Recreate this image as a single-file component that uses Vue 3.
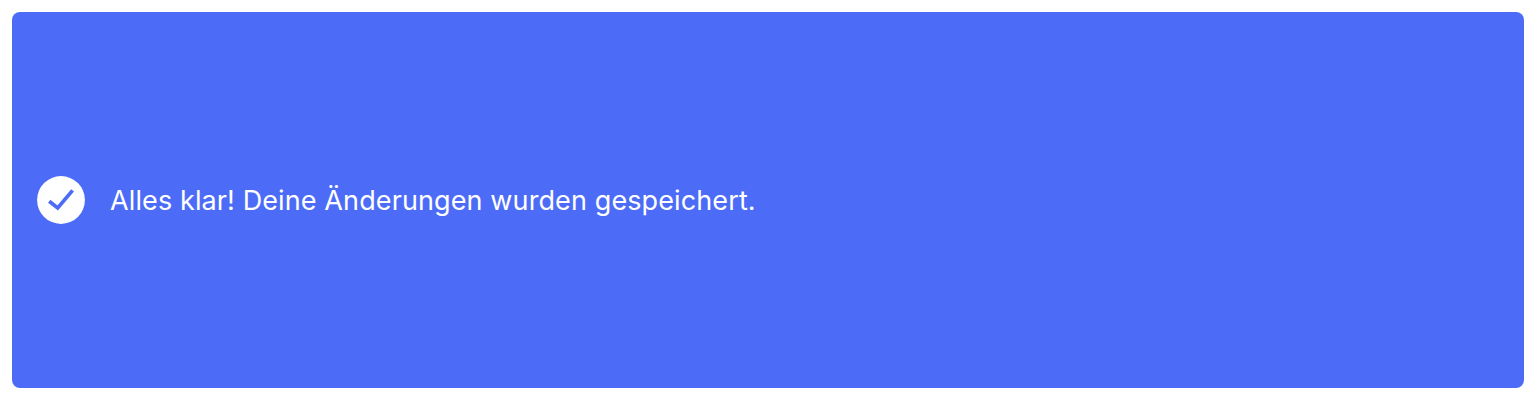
<script setup>
const message = 'Alles klar! Deine Änderungen wurden gespeichert.'
</script>

<template>
  <main class="page">
    <div class="notice" role="status">
      <svg class="icon" viewBox="0 0 48 48" aria-hidden="true">
        <circle cx="24" cy="24" r="23.9" fill="#fff" />
        <path d="M12.2 25.2 L20.7 32 L35.6 14.4" fill="none" stroke="#4c6cf8" stroke-width="3.7" />
      </svg>
      <p class="message">{{ message }}</p>
    </div>
  </main>
</template>

<style>
body {
  background: #fff;
}
</style>

<style scoped>
.page {
  box-sizing: border-box;
  height: 400px;
  padding: 12px;
}
.notice {
  box-sizing: border-box;
  height: 100%;
  display: flex;
  align-items: center;
  gap: 25px;
  padding: 0 25px;
  border-radius: 8px;
  background: #4c6cf8;
}
.icon {
  width: 48px;
  height: 48px;
  flex: none;
}
.message {
  margin: 0;
  padding-top: 1px;
  color: #fff;
  font-family: Inter, "Liberation Sans", sans-serif;
  font-size: 27px;
  letter-spacing: 0.11px;
  line-height: 36px;
  white-space: nowrap;
}
</style>
